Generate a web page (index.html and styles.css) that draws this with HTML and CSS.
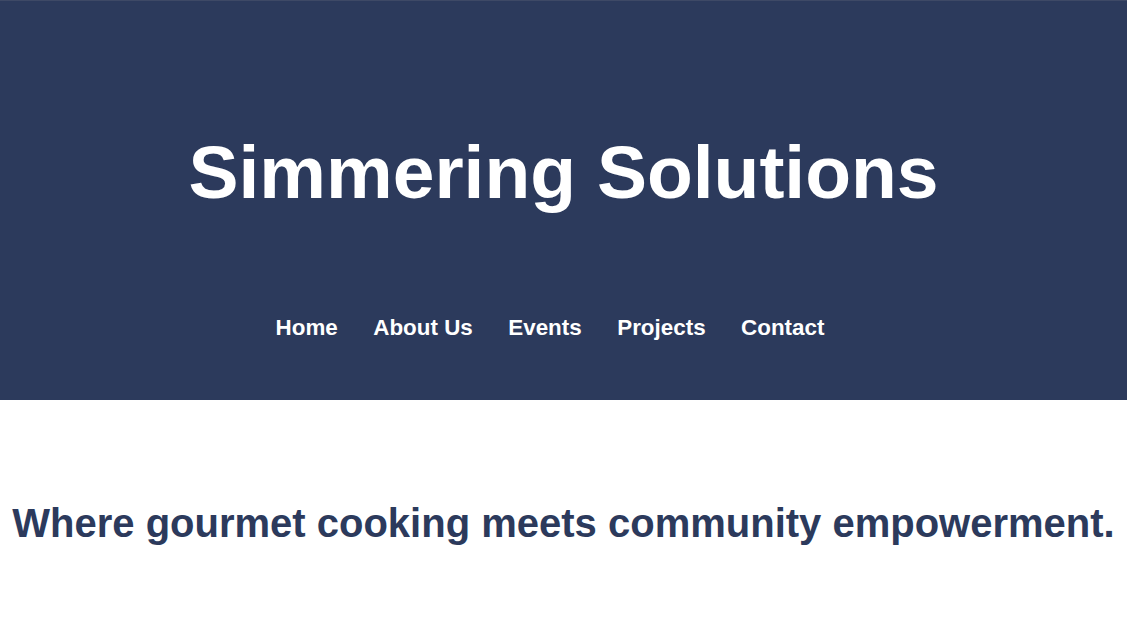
FILE: index.html
```html
<!DOCTYPE html>
<html lang="en">
<head>
<meta charset="utf-8">
<title>Simmering Solutions</title>
<link rel="stylesheet" href="styles.css">
</head>
<body>
<header class="site-header">
  <h1 class="site-title">Simmering Solutions</h1>
  <nav class="site-nav">
    <a href="#" class="nav-link">Home</a>
    <a href="#" class="nav-link">About Us</a>
    <a href="#" class="nav-link">Events</a>
    <a href="#" class="nav-link">Projects</a>
    <a href="#" class="nav-link">Contact</a>
  </nav>
</header>
<main class="intro">
  <h2 class="tagline">Where gourmet cooking meets community empowerment.</h2>
</main>
</body>
</html>
```
FILE: styles.css
```css
* { box-sizing: border-box; }
html, body {
  margin: 0;
  padding: 0;
  background: #ffffff;
  font-family: "Liberation Sans", Arial, sans-serif;
}
.site-header {
  height: 400px;
  background: #2c3a5c;
  border-top: 1px solid #3e4966;
  padding-top: 128px;
  display: flex;
  flex-direction: column;
  align-items: center;
}
.site-title {
  margin: 0;
  font-size: 75px;
  line-height: 1.15;
  font-weight: 700;
  color: #ffffff;
}
.site-nav {
  margin-top: 100px;
  display: flex;
  gap: 35.5px;
  padding-right: 27px;
}
.nav-link {
  color: #ffffff;
  text-decoration: none;
  font-size: 22.4px;
  font-weight: 700;
  line-height: 1.15;
}
.intro {
  padding-top: 100px;
  text-align: center;
}
.tagline {
  margin: 0;
  font-size: 40px;
  line-height: 1.15;
  font-weight: 700;
  color: #2c3a5c;
}
```
